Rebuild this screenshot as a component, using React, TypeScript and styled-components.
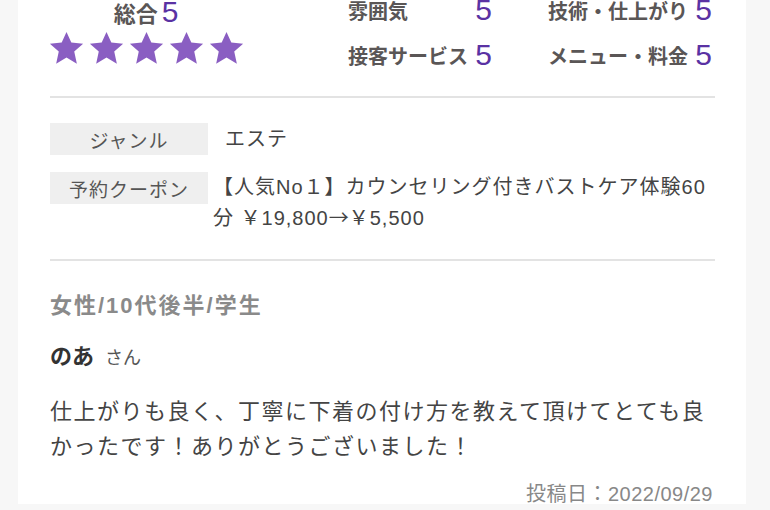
import React from "react";
import styled, { createGlobalStyle } from "styled-components";

const GlobalStyle = createGlobalStyle`
  html, body {
    margin: 0;
    padding: 0;
    background: #f7f7f7;
  }
  body {
    font-family: "Liberation Sans", "Noto Sans CJK JP", sans-serif;
    color: #444;
    overflow: hidden;
  }
`;

const Card = styled.div`
  margin: 0 24px 0 18px;
  background: #fff;
  padding: 0 31px 0 32px;
  height: 510px;
  box-sizing: border-box;
`;

const ScoreSection = styled.section`
  display: flex;
  align-items: flex-start;
  margin-top: -6px;
  padding-bottom: 25px;
  border-bottom: 2px solid #e3e3e3;
`;

const Overall = styled.div`
  display: flex;
  flex-direction: column;
  align-items: center;
  padding-top: 2px;
  width: 192px;
`;

const OverallTitle = styled.div`
  display: flex;
  align-items: center;
  gap: 4px;
  height: 32px;
  font-family: "Noto Sans CJK JP", sans-serif;
  font-size: 22px;
  font-weight: bold;
  color: #5a5656;
`;

const Num = styled.span`
  font-family: "Liberation Sans", sans-serif;
  font-size: 30px;
  font-weight: normal;
  color: #5a32a3;
  line-height: 1;
`;

const Stars = styled.div`
  display: flex;
  gap: 5px;
  margin-top: 3px;
`;

const ScoreGrid = styled.div`
  margin-left: auto;
  margin-right: 3px;
  display: grid;
  grid-template-columns: 144px 164px;
  column-gap: 56px;
  row-gap: 13px;
`;

const ScoreItem = styled.div`
  display: flex;
  align-items: center;
  justify-content: space-between;
  height: 32px;
`;

const ScoreLabel = styled.span`
  font-family: "Noto Sans CJK JP", sans-serif;
  font-size: 20px;
  font-weight: bold;
  color: #5a5656;
`;

const InfoSection = styled.section`
  display: flex;
  flex-direction: column;
  gap: 17px;
  padding: 25px 0 26px;
  border-bottom: 2px solid #e3e3e3;
`;

const InfoRow = styled.div`
  display: flex;
  align-items: flex-start;
`;

const InfoLabel = styled.div`
  flex: 0 0 158px;
  height: 32px;
  display: flex;
  align-items: center;
  justify-content: center;
  background: #efefef;
  font-size: 19px;
  color: #555;
  letter-spacing: 1px;
`;

const InfoValue = styled.div<{ $indent?: number }>`
  flex: 1;
  padding-left: ${(p) => p.$indent ?? 5}px;
  font-size: 20px;
  line-height: 30px;
  letter-spacing: 1px;
  color: #444;
  ${(p) => (p.$indent ? "margin-top: 1px;" : "")}
`;

const Arrow = styled.span`
  font-family: "Noto Sans CJK JP", sans-serif;
  letter-spacing: 0;
`;

const ReviewSection = styled.section`
  padding-top: 30px;
  display: flex;
  flex-direction: column;
`;

const Profile = styled.div`
  font-size: 22px;
  font-weight: bold;
  line-height: 30px;
  letter-spacing: 2px;
  color: #8a8a8a;
`;

const Reviewer = styled.div`
  margin-top: 21px;
  line-height: 30px;
  display: flex;
  align-items: baseline;
  gap: 11px;
`;

const ReviewerName = styled.span`
  font-size: 22px;
  font-weight: bold;
  color: #333;
`;

const Honorific = styled.span`
  font-size: 18px;
  color: #555;
`;

const ReviewText = styled.p`
  margin: 19px 0 0;
  font-family: "Noto Sans CJK JP", sans-serif;
  font-size: 22px;
  line-height: 35px;
  letter-spacing: 1.5px;
  color: #444;
`;

const PostDate = styled.div`
  margin-top: 17px;
  align-self: flex-end;
  margin-right: 2px;
  font-size: 20px;
  line-height: 30px;
  letter-spacing: 0.5px;
  color: #888;
`;

const Star = () => (
  <svg width="35" height="35" viewBox="0 0 24 24">
    <polygon
      points="12,0.6 15.3,7.9 23.4,8.7 17.3,14.1 19.1,22.4 12,18.2 4.9,22.4 6.7,14.1 0.6,8.7 8.7,7.9"
      fill="#8a5ec2"
    />
  </svg>
);

const scores: [string, string][] = [
  ["雰囲気", "5"],
  ["技術・仕上がり", "5"],
  ["接客サービス", "5"],
  ["メニュー・料金", "5"],
];

export default function App() {
  return (
    <>
      <GlobalStyle />
      <Card>
        <ScoreSection>
          <Overall>
            <OverallTitle>
              総合<Num>5</Num>
            </OverallTitle>
            <Stars>
              {[0, 1, 2, 3, 4].map((i) => (
                <Star key={i} />
              ))}
            </Stars>
          </Overall>
          <ScoreGrid>
            {scores.map(([label, value]) => (
              <ScoreItem key={label}>
                <ScoreLabel>{label}</ScoreLabel>
                <Num>{value}</Num>
              </ScoreItem>
            ))}
          </ScoreGrid>
        </ScoreSection>
        <InfoSection>
          <InfoRow>
            <InfoLabel>ジャンル</InfoLabel>
            <InfoValue $indent={17}>エステ</InfoValue>
          </InfoRow>
          <InfoRow>
            <InfoLabel>予約クーポン</InfoLabel>
            <InfoValue>
              【人気No１】カウンセリング付きバストケア体験60分 ￥19,800<Arrow>→</Arrow>￥5,500
            </InfoValue>
          </InfoRow>
        </InfoSection>
        <ReviewSection>
          <Profile>女性/10代後半/学生</Profile>
          <Reviewer>
            <ReviewerName>のあ</ReviewerName>
            <Honorific>さん</Honorific>
          </Reviewer>
          <ReviewText>
            仕上がりも良く、丁寧に下着の付け方を教えて頂けてとても良かったです！ありがとうございました！
          </ReviewText>
          <PostDate>投稿日：2022/09/29</PostDate>
        </ReviewSection>
      </Card>
    </>
  );
}
